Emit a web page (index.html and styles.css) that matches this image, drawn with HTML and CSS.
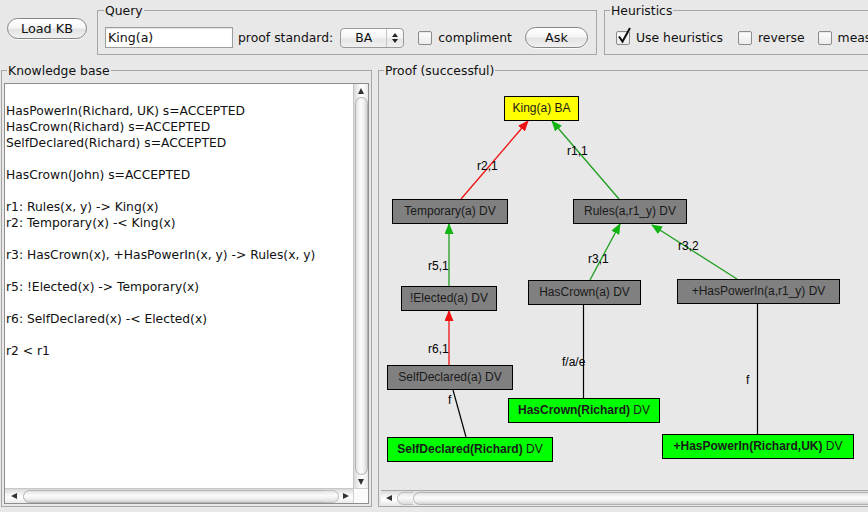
FILE: index.html
```html
<!DOCTYPE html>
<html>
<head>
<meta charset="utf-8">
<link rel="stylesheet" href="styles.css">
</head>
<body>
<div class="app">
  <div class="toolbar">
    <button class="pill load">Load KB</button>
    <fieldset class="group query">
      <legend>Query</legend>
      <div class="row">
        <input class="field" type="text" value="King(a)" readonly>
        <span class="lbl-ps">proof standard:</span>
        <div class="select">
          <span class="sel-val">BA</span>
          <span class="sel-arr"><i class="tri-up"></i><i class="tri-down"></i></span>
        </div>
        <span class="check cb-compl"></span>
        <span class="cb-label">compliment</span>
        <button class="pill ask">Ask</button>
      </div>
    </fieldset>
    <fieldset class="group heur">
      <legend>Heuristics</legend>
      <div class="row">
        <span class="check on"><svg class="tick" width="16" height="18" viewBox="0 0 16 18"><path d="M3 9.5 L6.5 14.5 L14 1" fill="none" stroke="#111" stroke-width="2"/></svg></span>
        <span class="cb-label">Use heuristics</span>
        <span class="check cb-rev"></span>
        <span class="cb-label">reverse</span>
        <span class="check cb-meas"></span>
        <span class="cb-label">meas</span>
      </div>
    </fieldset>
  </div>

  <div class="main">
    <fieldset class="group kb">
      <legend>Knowledge base</legend>
      <div class="pane">
        <div class="kb-text">
HasPowerIn(Richard, UK) s=ACCEPTED
HasCrown(Richard) s=ACCEPTED
SelfDeclared(Richard) s=ACCEPTED

HasCrown(John) s=ACCEPTED

r1: Rules(x, y) -&gt; King(x)
r2: Temporary(x) -&lt; King(x)

r3: HasCrown(x), +HasPowerIn(x, y) -&gt; Rules(x, y)

r5: !Elected(x) -&gt; Temporary(x)

r6: SelfDeclared(x) -&lt; Elected(x)

r2 &lt; r1</div>
        <div class="vscroll">
          <span class="arr-box"><i class="tri-up dark"></i></span>
          <span class="thumb-v"></span>
          <span class="arr-box"><i class="tri-down dark"></i></span>
        </div>
        <div class="hscroll">
          <span class="arr-box-h"><i class="tri-left"></i></span>
          <span class="thumb-h"></span>
          <span class="cap-h"></span>
          <span class="arr-box-h"><i class="tri-right"></i></span>
        </div>
        <div class="corner"></div>
      </div>
    </fieldset>

    <fieldset class="group proof">
      <legend>Proof (successful)</legend>
      <div class="canvas">
        <svg class="edges" width="500" height="412" viewBox="0 0 500 412">
          <defs>
            <marker id="ar" markerUnits="userSpaceOnUse" markerWidth="11" markerHeight="9" refX="10" refY="4.5" orient="auto">
              <path d="M0,0 L11,4.5 L0,9 z" fill="#ee1111"/>
            </marker>
            <marker id="ag" markerUnits="userSpaceOnUse" markerWidth="11" markerHeight="9" refX="10" refY="4.5" orient="auto">
              <path d="M0,0 L11,4.5 L0,9 z" fill="#11b411"/>
            </marker>
          </defs>
          <line x1="80" y1="121" x2="147" y2="43" stroke="#ee1111" stroke-width="1.3" marker-end="url(#ar)"/>
          <line x1="238" y1="121" x2="171" y2="43" stroke="#1f9f1f" stroke-width="1.3" marker-end="url(#ag)"/>
          <line x1="68" y1="208" x2="68" y2="146" stroke="#1f9f1f" stroke-width="1.3" marker-end="url(#ag)"/>
          <line x1="209" y1="202" x2="239" y2="146" stroke="#1f9f1f" stroke-width="1.3" marker-end="url(#ag)"/>
          <line x1="356" y1="201" x2="271" y2="147" stroke="#1f9f1f" stroke-width="1.3" marker-end="url(#ag)"/>
          <line x1="68" y1="287" x2="68" y2="233" stroke="#ee1111" stroke-width="1.3" marker-end="url(#ar)"/>
          <line x1="202.5" y1="227" x2="202.5" y2="320" stroke="#000" stroke-width="1.2"/>
          <line x1="376.5" y1="226" x2="376.5" y2="356" stroke="#000" stroke-width="1.2"/>
          <line x1="72" y1="312" x2="85" y2="359" stroke="#000" stroke-width="1.2"/>
        </svg>

        <div class="node yellow" style="left:123px;top:18px;width:75px">King(a) BA</div>
        <div class="node gray" style="left:11px;top:121px;width:116px">Temporary(a) DV</div>
        <div class="node gray" style="left:192px;top:121px;width:114px">Rules(a,r1_y) DV</div>
        <div class="node gray" style="left:20px;top:208px;width:96px">!Elected(a) DV</div>
        <div class="node gray" style="left:147px;top:202px;width:113px">HasCrown(a) DV</div>
        <div class="node gray" style="left:296px;top:201px;width:163px">+HasPowerIn(a,r1_y) DV</div>
        <div class="node gray" style="left:6px;top:287px;width:126px">SelfDeclared(a) DV</div>
        <div class="node green" style="left:127px;top:320px;width:152px"><b>HasCrown(Richard)</b> DV</div>
        <div class="node green" style="left:6px;top:359px;width:166px"><b>SelfDeclared(Richard)</b> DV</div>
        <div class="node green" style="left:281px;top:356px;width:192px"><b>+HasPowerIn(Richard,UK)</b> DV</div>

        <span class="elabel" style="left:96px;top:81px">r2,1</span>
        <span class="elabel" style="left:186px;top:66px">r1,1</span>
        <span class="elabel" style="left:47px;top:181px">r5,1</span>
        <span class="elabel" style="left:47px;top:264px">r6,1</span>
        <span class="elabel" style="left:207px;top:174px">r3,1</span>
        <span class="elabel" style="left:297px;top:161px">r3,2</span>
        <span class="elabel" style="left:181px;top:277px">f/a/e</span>
        <span class="elabel" style="left:365px;top:295px">f</span>
        <span class="elabel" style="left:67px;top:315px">f</span>
      </div>
      <div class="hscroll proof-scroll">
        <span class="arr-box-h"><i class="tri-left"></i></span>
        <span class="cap-h start"></span>
        <span class="thumb-h"></span>
      </div>
    </fieldset>
  </div>
</div>
</body>
</html>
```

FILE: styles.css
```css
* { box-sizing: border-box; }
html, body { margin: 0; padding: 0; }
body {
  width: 868px;
  height: 512px;
  overflow: hidden;
  background: #e8e8e8;
  font-family: "DejaVu Sans", "Noto Sans", sans-serif;
  font-size: 12.4px;
  color: #111;
}
.app { width: 900px; }

.toolbar { display: flex; align-items: flex-start; height: 60px; }

.pill {
  font: inherit;
  font-size: 12.8px;
  color: #111;
  height: 21px;
  padding: 0;
  border: 1px solid #858585;
  border-radius: 11px;
  background: linear-gradient(#ffffff, #f6f6f6 45%, #e4e4e4 55%, #f0f0f0);
  box-shadow: 0 1px 0 rgba(255,255,255,0.8);
  flex: none;
}
.load { margin: 18px 0 0 7px; width: 80px; }
.ask { margin-left: 13px; width: 63px; height: 21px; margin-top: -1px; }

.group {
  border: 1px solid #a6a6a6;
  margin: 0;
  min-width: 0;
  flex: none;
}
.group legend {
  padding: 0 1px;
  line-height: 15px;
  font-size: 12.4px;
  color: #111;
}
.query { margin: 3px 0 0 10px; width: 500px; padding: 9px 7px 6px 7px; }
.query legend { margin-left: -1px; }
.heur { margin: 3px 0 0 7px; width: 300px; padding: 9px 11px 6px 11px; }
.heur legend { margin-left: -6px; }

.row { display: flex; align-items: center; height: 21px; white-space: nowrap; }

.field {
  width: 128px;
  height: 21px;
  border: 1px solid #9c9c9c;
  box-shadow: inset 0 1px 1px rgba(0,0,0,0.12);
  background: #fff;
  padding: 0 2px;
  font: inherit;
  font-size: 12.6px;
  color: #111;
  outline: none;
  flex: none;
}
.lbl-ps { margin-left: 5px; }

.select {
  margin-left: 7px;
  width: 64px;
  height: 20px;
  border: 1px solid #9a9a9a;
  border-radius: 4px;
  background: linear-gradient(#ffffff, #f3f3f3 50%, #e6e6e6 55%, #f0f0f0);
  display: flex;
  flex: none;
}
.sel-val { width: 45px; text-align: center; line-height: 18px; }
.sel-arr {
  flex: 1;
  border-left: 1px solid #c4c4c4;
  display: flex;
  flex-direction: column;
  align-items: center;
  justify-content: center;
  gap: 2px;
}
.tri-up, .tri-down, .tri-left, .tri-right { display: block; width: 0; height: 0; }
.tri-up { border-left: 3px solid transparent; border-right: 3px solid transparent; border-bottom: 4px solid #222; }
.tri-down { border-left: 3px solid transparent; border-right: 3px solid transparent; border-top: 4px solid #222; }
.tri-up.dark { border-left-width: 3.5px; border-right-width: 3.5px; border-bottom-width: 6px; border-bottom-color: #333; }
.tri-down.dark { border-left-width: 3.5px; border-right-width: 3.5px; border-top-width: 6px; border-top-color: #333; }
.tri-left { border-top: 3.5px solid transparent; border-bottom: 3.5px solid transparent; border-right: 6px solid #333; }
.tri-right { border-top: 3.5px solid transparent; border-bottom: 3.5px solid transparent; border-left: 6px solid #333; }

.check {
  position: relative;
  width: 14px;
  height: 14px;
  border: 1px solid #8c8c8c;
  border-radius: 2px;
  background: linear-gradient(#fdfdfd, #ececec);
  box-shadow: inset 0 1px 1px rgba(0,0,0,0.08);
  flex: none;
}
.check .tick { position: absolute; left: -1px; top: -5px; overflow: visible; }
.cb-label { margin-left: 6px; }
.cb-compl { margin-left: 14px; }
.cb-rev { margin-left: 15px; }
.cb-meas { margin-left: 13px; }

.main { display: flex; align-items: flex-start; }
.kb { margin: 3px 0 0 1px; width: 371px; padding: 5px 2px 2px 2px; }
.kb legend { margin-left: 3px; }
.proof { margin: 3px 0 0 6px; width: 510px; padding: 0 0 1px 2px; }
.proof legend { margin-left: 3px; }

.pane {
  height: 421px;
  border: 1px solid #8e8e8e;
  background: #fff;
  display: grid;
  grid-template-columns: 1fr 15px;
  grid-template-rows: 1fr 15px;
}
.kb-text {
  padding: 3px 0 0 1px;
  line-height: 16px;
  font-size: 12.3px;
  white-space: pre;
  overflow: hidden;
  color: #111;
}
.vscroll {
  display: flex;
  flex-direction: column;
  align-items: center;
  border-left: 1px solid #c6c6c6;
  background: linear-gradient(90deg, #dadada, #f3f3f3 35%, #ffffff 60%, #e9e9e9);
}
.arr-box { height: 13px; flex: none; display: flex; align-items: center; justify-content: center; width: 100%; }
.thumb-v {
  flex: 1;
  width: 13px;
  border: 1px solid #b2b2b2;
  border-radius: 7px;
  background: linear-gradient(90deg, #e2e2e2, #fbfbfb 40%, #f1f1f1 70%, #d2d2d2);
}
.hscroll {
  display: flex;
  align-items: center;
  height: 15px;
  border-top: 1px solid #c6c6c6;
  background: linear-gradient(#dadada, #f3f3f3 35%, #ffffff 60%, #e9e9e9);
  padding-left: 2px;
}
.arr-box-h { width: 14px; height: 100%; flex: none; display: flex; align-items: center; justify-content: center; }
.thumb-h {
  flex: 1;
  height: 13px;
  margin-left: 2px;
  border: 1px solid #b2b2b2;
  border-radius: 7px;
  background: linear-gradient(#e2e2e2, #fbfbfb 40%, #f1f1f1 70%, #d2d2d2);
}
.cap-h {
  width: 16px;
  height: 13px;
  flex: none;
  margin-left: -8px;
  border: 1px solid #bdbdbd;
  border-left: none;
  border-radius: 0 7px 7px 0;
  background: linear-gradient(#e6e6e6, #fafafa 40%, #eeeeee 70%, #d8d8d8);
}
.cap-h.start {
  margin-left: 1px;
  width: 16px;
  border: 1px solid #bdbdbd;
  border-right: none;
  border-radius: 7px 0 0 7px;
}
.corner { background: #fbfbfb; border-left: 1px solid #d0d0d0; border-top: 1px solid #d0d0d0; }

.canvas {
  position: relative;
  height: 412px;
  overflow: hidden;
  font-family: "Liberation Sans", Arial, sans-serif;
  font-size: 12px;
}
.edges { position: absolute; left: 0; top: 0; }
.node {
  position: absolute;
  height: 25px;
  border: 1px solid #000;
  line-height: 23px;
  text-align: center;
  white-space: nowrap;
  color: #1a1a1a;
}
.node.gray { background: #808080; }
.node.yellow { background: #ffff00; }
.node.green { background: #00ff00; }
.node b { font-weight: bold; }
.elabel {
  position: absolute;
  line-height: 14px;
  color: #000;
  white-space: nowrap;
}
.proof-scroll { border-top: 1px solid #a8a8a8; padding-left: 1px; }
.proof-scroll .thumb-h { margin-left: 0; border-left: 1px solid #b2b2b2; }
```
